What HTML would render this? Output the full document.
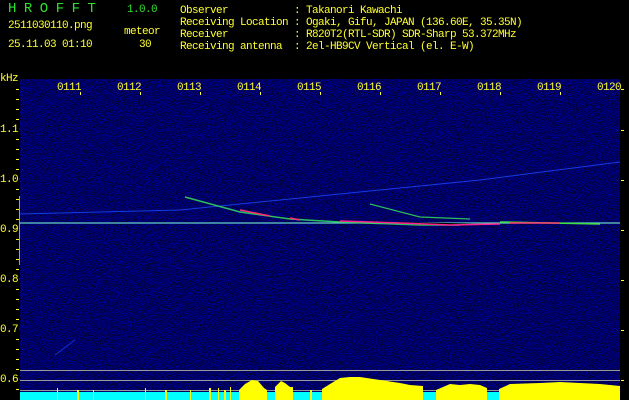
<!DOCTYPE html>
<html><head><meta charset="utf-8"><style>
html,body{margin:0;padding:0;background:#000;width:629px;height:400px;overflow:hidden}
.t{position:absolute;font-family:"Liberation Mono",monospace;font-size:11px;letter-spacing:-0.6px;color:#ffff30;white-space:pre;line-height:12px}
.g{color:#30e030}
</style></head><body>
<div class="t g" style="left:8px;top:3px;font-size:14px;letter-spacing:7.5px">HROFFT</div>
<div class="t g" style="left:127px;top:4px">1.0.0</div>
<div class="t" style="left:8px;top:20px">2511030110.png</div>
<div class="t" style="left:124px;top:26px">meteor</div>
<div class="t" style="left:8px;top:39px">25.11.03 01:10</div>
<div class="t" style="left:139px;top:39px">30</div>
<div class="t" style="left:180px;top:5px">Observer           : Takanori Kawachi
Receiving Location : Ogaki, Gifu, JAPAN (136.60E, 35.35N)
Receiver           : R820T2(RTL-SDR) SDR-Sharp 53.372MHz
Receiving antenna  : 2el-HB9CV Vertical (el. E-W)</div>
<div class="t" style="left:0;top:73px">kHz</div>
<div class="t" style="left:0;top:124px">1.1-</div>
<div class="t" style="left:0;top:174px">1.0-</div>
<div class="t" style="left:0;top:224px">0.9-</div>
<div class="t" style="left:0;top:274px">0.8-</div>
<div class="t" style="left:0;top:324px">0.7-</div>
<div class="t" style="left:0;top:374px">0.6-</div>
<svg style="position:absolute;left:0;top:0" width="629" height="400">
<defs>
<filter id="n" x="0" y="0" width="100%" height="100%">
<feTurbulence type="fractalNoise" baseFrequency="1.4" numOctaves="1" seed="5"/>
<feColorMatrix type="matrix" values="0 0 0 0 0  0 0 0 0 0  4.5 0 0 0 -1.8  0 0 0 0 1"/>
</filter>
</defs>
<rect x="20" y="79" width="600" height="321" fill="#000010"/>
<rect x="20" y="79" width="600" height="321" filter="url(#n)" opacity="0.62"/>
<g fill="#ffff30">
<rect x="16" y="89" width="3" height="1"/><rect x="16" y="99" width="3" height="1"/><rect x="16" y="109" width="3" height="1"/><rect x="16" y="119" width="3" height="1"/><rect x="16" y="139" width="3" height="1"/><rect x="16" y="149" width="3" height="1"/><rect x="16" y="159" width="3" height="1"/><rect x="16" y="169" width="3" height="1"/><rect x="16" y="189" width="3" height="1"/><rect x="16" y="199" width="3" height="1"/><rect x="16" y="209" width="3" height="1"/><rect x="16" y="219" width="3" height="1"/><rect x="16" y="239" width="3" height="1"/><rect x="16" y="249" width="3" height="1"/><rect x="16" y="259" width="3" height="1"/><rect x="16" y="269" width="3" height="1"/><rect x="16" y="289" width="3" height="1"/><rect x="16" y="299" width="3" height="1"/><rect x="16" y="309" width="3" height="1"/><rect x="16" y="319" width="3" height="1"/><rect x="16" y="339" width="3" height="1"/><rect x="16" y="349" width="3" height="1"/><rect x="16" y="359" width="3" height="1"/><rect x="16" y="369" width="3" height="1"/><rect x="16" y="389" width="3" height="1"/>
<rect x="621" y="89" width="3" height="1"/><rect x="621" y="130" width="3" height="1"/><rect x="621" y="180" width="3" height="1"/><rect x="621" y="230" width="3" height="1"/><rect x="621" y="280" width="3" height="1"/><rect x="621" y="330" width="3" height="1"/><rect x="621" y="380" width="3" height="1"/>
</g>
<rect x="19" y="196" width="1" height="69" fill="#999"/>
<g font-family="Liberation Mono,monospace" font-size="11" fill="#ffff30" letter-spacing="-0.6">
<text x="57" y="90">0111</text><text x="117" y="90">0112</text><text x="177" y="90">0113</text><text x="237" y="90">0114</text><text x="297" y="90">0115</text><text x="357" y="90">0116</text><text x="417" y="90">0117</text><text x="477" y="90">0118</text><text x="537" y="90">0119</text><text x="597" y="90">0120</text>
</g>
<g fill="#ffff30"><rect x="80" y="92" width="1" height="3"/><rect x="140" y="92" width="1" height="3"/><rect x="200" y="92" width="1" height="3"/><rect x="260" y="92" width="1" height="3"/><rect x="320" y="92" width="1" height="3"/><rect x="380" y="92" width="1" height="3"/><rect x="440" y="92" width="1" height="3"/><rect x="500" y="92" width="1" height="3"/><rect x="560" y="92" width="1" height="3"/></g>
<path d="M20 214 L180 210 L480 180 L620 162" stroke="#1a4aff" stroke-width="1" fill="none" opacity="0.8"/>
<path d="M20 223 L620 223" stroke="#30c0c0" stroke-width="1.2"/>
<path d="M20 223 L620 223" stroke="#d0ffd0" stroke-width="0.4"/>
<path d="M185 197 L240 212 L290 219 L340 222 L420 225 L460 225" stroke="#30e060" stroke-width="1.5" fill="none" opacity="0.85"/>
<path d="M240 210 L270 216 M290 218 L300 220" stroke="#ff3070" stroke-width="1.5"/>
<path d="M340 221 L400 223 L450 225 L500 224" stroke="#ff2090" stroke-width="1.5"/>
<path d="M370 204 L420 217 L470 219" stroke="#30e060" stroke-width="1.2" fill="none" opacity="0.85"/>
<path d="M500 222 L600 224" stroke="#40e040" stroke-width="1.5"/>
<path d="M510 223 L560 223" stroke="#ff3070" stroke-width="1.5"/>
<path d="M55 355 L75 340" stroke="#1a4aff" stroke-width="1" opacity="0.7"/>
<g fill="#999"><rect x="20" y="370" width="600" height="1"/><rect x="20" y="380" width="600" height="1"/><rect x="20" y="390" width="600" height="1"/></g>
<rect x="20" y="392" width="600" height="8" fill="#00ffff"/>
<polygon fill="#ffff00" points="239,400 239,390 245,384 252,380 258,381 264,388 267,390 267,400"/>
<polygon fill="#ffff00" points="275,400 275,387 281,381 285,383 290,387 293,387 293,400"/>
<polygon fill="#ffff00" points="322,400 322,389 330,384 340,378 350,377 360,377 380,380 400,383 410,385 423,386 423,400"/>
<polygon fill="#ffff00" points="436,400 436,390 450,384 460,385 470,384 480,385 487,388 487,400"/>
<polygon fill="#ffff00" points="499,400 499,389 510,384 540,383 560,382 580,383 600,384 620,386 620,400"/>
<g fill="#ffff00"><rect x="57" y="388" width="1" height="12"/><rect x="77" y="390" width="2" height="10"/><rect x="93" y="390" width="1" height="10"/><rect x="145" y="388" width="1" height="12"/><rect x="165" y="390" width="2" height="10"/><rect x="190" y="390" width="1" height="10"/><rect x="209" y="388" width="2" height="12"/><rect x="218" y="388" width="1" height="12"/><rect x="224" y="390" width="2" height="10"/><rect x="230" y="387" width="1" height="13"/><rect x="310" y="390" width="2" height="10"/></g>
</svg>
</body></html>
